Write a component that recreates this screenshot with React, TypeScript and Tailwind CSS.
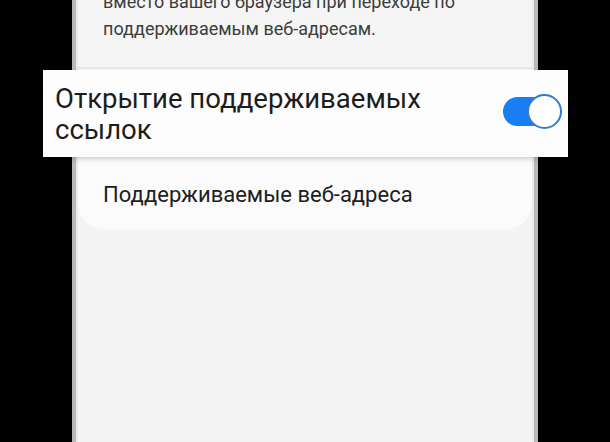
import React from "react";

const font = { fontFamily: "Roboto, 'Noto Sans', Arial, sans-serif" };

function Toggle() {
  return (
    <div className="relative w-[59px] h-[35px]">
      <div className="absolute left-0 top-[3px] w-[56px] h-[29px] rounded-full bg-[#1a7ef2]" />
      <div className="absolute right-0 top-0 w-[35px] h-[35px] rounded-full bg-white border-2 border-[#2f7bd6]" />
    </div>
  );
}

export default function App() {
  return (
    <div className="relative w-[610px] h-[442px] bg-black overflow-hidden" style={font}>
      <div className="flex h-full">
        <div className="w-[72px] shrink-0" />
        {/* device screen */}
        <div className="flex w-[466px] shrink-0 h-full">
          <div className="w-[4px] bg-[#b9b9b9]" />
          <div className="w-[2px] bg-[#ebebeb]" />
          <div className="flex-1 bg-[#f4f4f4] flex flex-col">
            <div className="h-[67px] bg-[#f5f5f5] overflow-hidden">
              <p className="mt-[-12px] pl-[25px] pr-[20px] text-[18px] leading-[27px] text-[#3c3c3c]">
                вместо вашего браузера при переходе по поддерживаемым веб-адресам.
              </p>
            </div>
            <div className="h-[2px] bg-[#e9e9e9]" />
            <div className="bg-[#fbfbfb] rounded-b-[26px] flex flex-col">
              <div className="h-[112px]" />
              <div className="pl-[25px] pb-[20px] text-[22px] leading-[28px] text-[#202020]">
                Поддерживаемые веб-адреса
              </div>
            </div>
          </div>
          <div className="w-[2px] bg-[#ebebeb]" />
          <div className="w-[4px] bg-[#b9b9b9]" />
        </div>
        <div className="flex-1" />
      </div>

      {/* highlighted setting */}
      <div className="absolute left-[43px] top-[70px] w-[525px] h-[87px] bg-[#fdfdfd] shadow-[0_2px_5px_rgba(0,0,0,0.18)] flex items-center justify-between pl-[12px] pr-[6px]">
        <div className="text-[27.5px] leading-[31px] text-[#1c1c1c]">
          Открытие поддерживаемых
          <br />
          ссылок
        </div>
        <div className="mt-[-5px]">
          <Toggle />
        </div>
      </div>
    </div>
  );
}
